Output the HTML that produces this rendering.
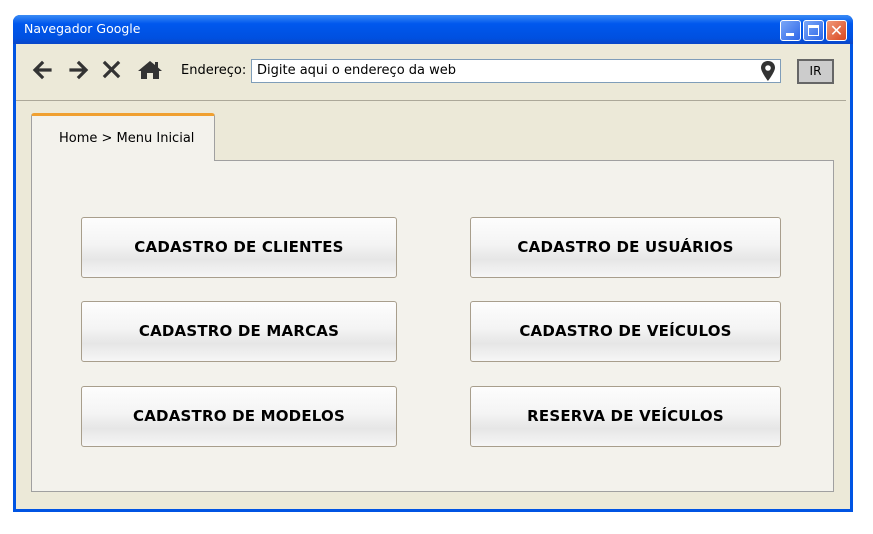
<!DOCTYPE html>
<html><head><meta charset="utf-8"><style>
*{margin:0;padding:0;box-sizing:border-box}
body{width:873px;height:534px;background:#fff;position:relative;font-family:"DejaVu Sans",Verdana,sans-serif;overflow:hidden}
.win{position:absolute;left:13px;top:15px;width:840px;height:497px;background:#0054E3;border-radius:7px 7px 0 0}
.title{position:absolute;left:0;top:0;width:840px;height:29px;background:linear-gradient(#3b8cf5,#0058ee 30%,#0050e0 80%,#0a46c8);border-radius:7px 7px 0 0;color:#fff;font-size:12.5px;padding:6px 0 0 11px}
.inner{position:absolute;left:3px;top:29px;width:834px;height:465px;background:#ECE9D8}
.tb{position:absolute;top:5px;width:21px;height:21px;border:1px solid #fff;border-radius:3px;background:linear-gradient(135deg,#7aa7f7,#2d66e8)}
.sep{position:absolute;left:0;top:56px;width:830px;height:1px;background:#aca899}
.tab{position:absolute;left:15px;top:69px;width:184px;height:48px;background:#F3F2EC;border:1px solid #a0a0a0;border-top:3px solid #F0A030;border-bottom:none;border-radius:3px 3px 0 0;font-size:13px;padding:15px 0 0 27px;color:#000;z-index:2}
.panel{position:absolute;left:15px;top:116px;width:803px;height:332px;background:#F3F2EC;border:1px solid #a0a0a0}
.btn{position:absolute;width:316px;height:61px;border:1px solid #a89e8c;border-radius:3px;background:linear-gradient(#fdfdfd,#f4f4f4 45%,#e6e6e6 70%,#f6f6f6);font-weight:bold;font-size:15px;text-align:center;line-height:59px;color:#000;letter-spacing:0.2px}
</style></head><body>
<div class="win">
<div class="title">Navegador Google</div>
<div class="tb" style="left:767px"><div style="position:absolute;left:5px;top:12px;width:8px;height:3px;background:#fff"></div></div>
<div class="tb" style="left:790px"><div style="position:absolute;left:4px;top:4px;width:11px;height:11px;border:1px solid #fff;border-top:3px solid #fff"></div></div>
<div class="tb" style="left:813px;background:linear-gradient(135deg,#f09a7a,#d9461f);color:#fff;font-size:16px;line-height:19px;text-align:center">✕</div>
<div class="inner">
<svg style="position:absolute;left:16px;top:15px" width="130" height="22" viewBox="0 0 130 22">
<g stroke="#333" stroke-width="3.2" fill="none" stroke-linecap="square">
<path d="M18 11H4M10 4L3 11L10 18"/>
<path d="M39 11H53M47 4L54 11L47 18"/>
<path d="M73 4L86 17M86 4L73 17"/>
</g>
<path fill="#333" d="M118 2L106 12h3v8h6v-6h6v6h6v-8h3l-4-3.5V3h-3v3z"/>
</svg>
<div style="position:absolute;left:165px;top:19px;font-size:13px">Endereço:</div>
<div style="position:absolute;left:235px;top:15px;width:530px;height:24px;background:#fff;border:1px solid #7f9db9;font-size:13px;padding:3px 0 0 5px">Digite aqui o endereço da web</div>
<svg style="position:absolute;left:744px;top:17px" width="16" height="20" viewBox="0 0 16 20"><path fill="#333" d="M8 0C3.6 0 1 3 1 6.8 1 11 8 20 8 20s7-9 7-13.2C15 3 12.4 0 8 0zm0 4.2a2.8 2.8 0 110 5.6 2.8 2.8 0 010-5.6z"/></svg>
<div style="position:absolute;left:781px;top:15px;width:37px;height:25px;background:#ccc;border:2px solid #666;font-size:12px;text-align:center;line-height:21px">IR</div>
<div class="sep"></div>
<div class="tab">Home &gt; Menu Inicial</div>
<div class="panel"></div>
<div class="btn" style="left:65px;top:173px">CADASTRO DE CLIENTES</div>
<div class="btn" style="left:454px;top:173px;width:311px">CADASTRO DE USUÁRIOS</div>
<div class="btn" style="left:65px;top:257px">CADASTRO DE MARCAS</div>
<div class="btn" style="left:454px;top:257px;width:311px">CADASTRO DE VEÍCULOS</div>
<div class="btn" style="left:65px;top:342px">CADASTRO DE MODELOS</div>
<div class="btn" style="left:454px;top:342px;width:311px">RESERVA DE VEÍCULOS</div>
</div>
</div>
</body></html>
